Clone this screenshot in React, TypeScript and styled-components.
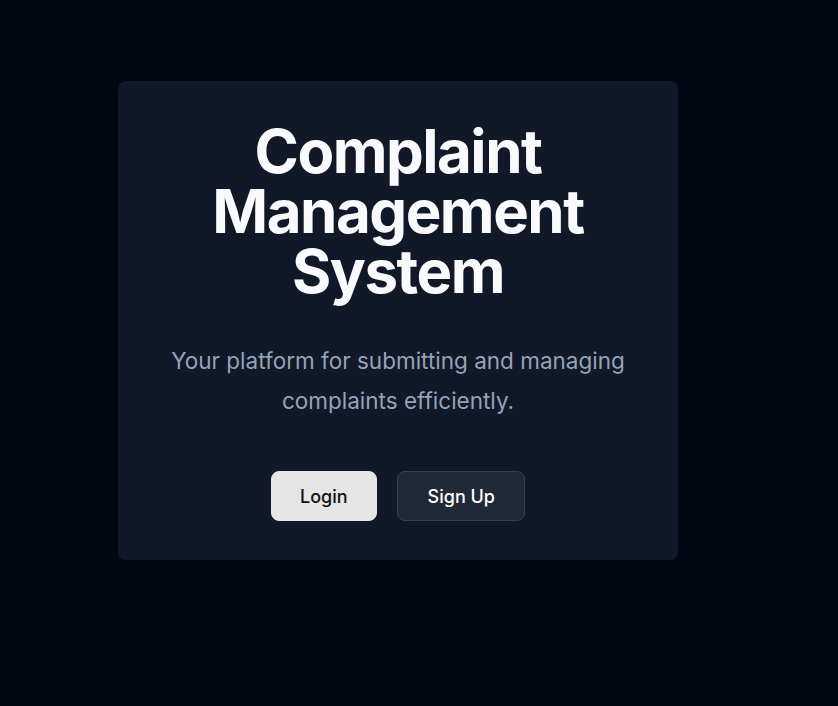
import React from "react";
import styled, { createGlobalStyle } from "styled-components";

const GlobalStyle = createGlobalStyle`
  html, body {
    margin: 0;
    padding: 0;
    background: #030712;
  }
  body {
    font-family: Inter, "Noto Sans", sans-serif;
    -webkit-font-smoothing: antialiased;
  }
  * { box-sizing: border-box; }
`;

const Page = styled.main`
  min-height: 706px;
  background: #030712;
  padding: 81px 0 0 118px;
`;

const Card = styled.section`
  width: 560px;
  background: #111827;
  border-radius: 8px;
  padding: 40px 40px 39px;
  display: flex;
  flex-direction: column;
  align-items: center;
  text-align: center;
`;

const Title = styled.h1`
  margin: 0;
  font-size: 60px;
  line-height: 60px;
  font-weight: 700;
  letter-spacing: -0.025em;
  color: #f9fafb;
  max-width: 420px;
`;

const Subtitle = styled.p`
  margin: 40px 0 0;
  font-size: 22.5px;
  line-height: 40px;
  font-weight: 400;
  color: #94a3b8;
`;

const Actions = styled.div`
  margin-top: 50px;
  display: flex;
  gap: 20px;
`;

const Button = styled.button<{ $variant: "light" | "dark" }>`
  height: 50px;
  padding: 0 ${(p) => (p.$variant === "light" ? "28.5px" : "29.5px")};
  border-radius: 8px;
  font-family: inherit;
  font-size: 18px;
  font-weight: 500;
  cursor: pointer;
  border: 1px solid ${(p) => (p.$variant === "light" ? "#e5e5e5" : "#374151")};
  background: ${(p) => (p.$variant === "light" ? "#e5e5e5" : "#1f2937")};
  color: ${(p) => (p.$variant === "light" ? "#111111" : "#ffffff")};
`;

export default function App() {
  return (
    <>
      <GlobalStyle />
      <Page>
        <Card>
          <Title>Complaint Management System</Title>
          <Subtitle>
            Your platform for submitting and managing
            <br />
            complaints efficiently.
          </Subtitle>
          <Actions>
            <Button $variant="light">Login</Button>
            <Button $variant="dark">Sign Up</Button>
          </Actions>
        </Card>
      </Page>
    </>
  );
}
